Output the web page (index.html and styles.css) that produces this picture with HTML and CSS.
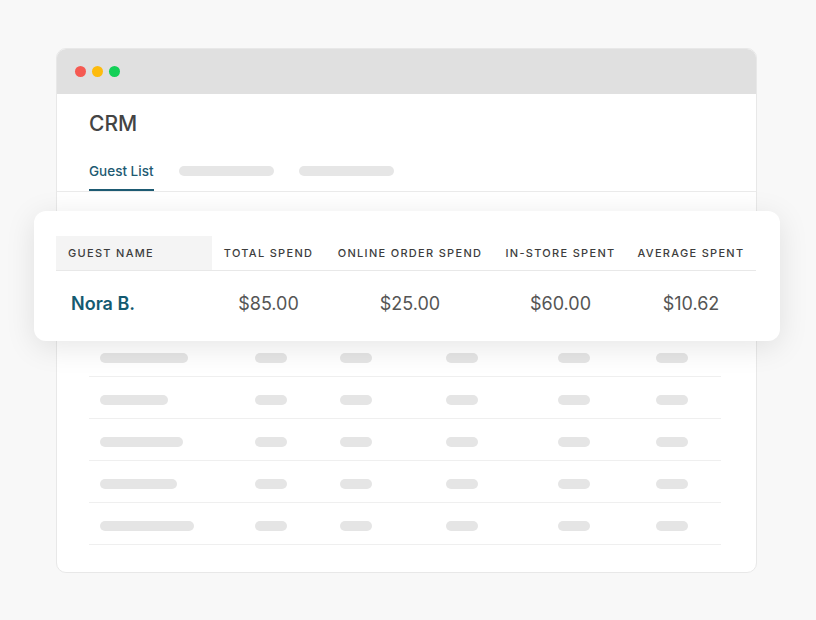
FILE: index.html
```html
<!DOCTYPE html>
<html lang="en">
<head>
    <meta charset="UTF-8">
    <meta name="viewport" content="width=device-width, initial-scale=1.0">
    <title>CRM - Guest List</title>
    <link rel="stylesheet" href="styles.css">
</head>
<body>
    <div class="window">
        <div class="titlebar">
            <span class="dot red"></span>
            <span class="dot yellow"></span>
            <span class="dot green"></span>
        </div>

        <div class="app-header">
            <h1>CRM</h1>
            <div class="tabs">
                <span class="tab active">Guest List</span>
                <span class="tab-placeholder"></span>
                <span class="tab-placeholder"></span>
            </div>
        </div>

        <!-- skeleton rows behind the highlighted card -->
        <div class="skeleton">
            <div class="sk-row">
                <span class="bar" style="width: 88px"></span>
                <span class="bar short"></span><span class="bar short"></span><span class="bar short"></span><span class="bar short"></span><span class="bar short"></span>
            </div>
            <div class="sk-row">
                <span class="bar" style="width: 68px"></span>
                <span class="bar short"></span><span class="bar short"></span><span class="bar short"></span><span class="bar short"></span><span class="bar short"></span>
            </div>
            <div class="sk-row">
                <span class="bar" style="width: 83px"></span>
                <span class="bar short"></span><span class="bar short"></span><span class="bar short"></span><span class="bar short"></span><span class="bar short"></span>
            </div>
            <div class="sk-row">
                <span class="bar" style="width: 77px"></span>
                <span class="bar short"></span><span class="bar short"></span><span class="bar short"></span><span class="bar short"></span><span class="bar short"></span>
            </div>
            <div class="sk-row">
                <span class="bar" style="width: 94px"></span>
                <span class="bar short"></span><span class="bar short"></span><span class="bar short"></span><span class="bar short"></span><span class="bar short"></span>
            </div>
        </div>
    </div>

    <div class="guest-card">
        <div class="guest-table">
            <div class="cell head name-head">Guest Name</div>
            <div class="cell head">Total Spend</div>
            <div class="cell head">Online Order Spend</div>
            <div class="cell head">In-Store Spent</div>
            <div class="cell head">Average Spent</div>

            <div class="cell guest-name">Nora B.</div>
            <div class="cell amount">$85.00</div>
            <div class="cell amount">$25.00</div>
            <div class="cell amount">$60.00</div>
            <div class="cell amount">$10.62</div>
        </div>
    </div>
</body>
</html>
```

FILE: styles.css
```css
body {
    margin: 0;
    background: #f8f8f8;
    font-family: Inter, "Noto Sans", Arial, sans-serif;
    color: #444;
}

.window {
    width: 699px;
    height: 523px;
    margin: 48px 0 0 56px;
    background: white;
    border: 1px solid #e8e8e8;
    border-radius: 10px;
    overflow: hidden;
}

.titlebar {
    height: 45px;
    background: #e0e0e0;
    display: flex;
    align-items: center;
    gap: 6px;
    padding-left: 18px;
}

.dot {
    width: 11px;
    height: 11px;
    border-radius: 50%;
}

.red { background: #f55a52; }
.yellow { background: #fdbb0d; }
.green { background: #13d057; }

.app-header {
    padding: 17px 32px 0;
    border-bottom: 1px solid #ebebeb;
}

.app-header h1 {
    margin: 0;
    font-size: 21px;
    font-weight: 500;
    line-height: 26px;
    color: #444;
}

.tabs {
    display: flex;
    align-items: center;
    gap: 25px;
    margin-top: 24px;
}

.tab {
    font-size: 13.5px;
    font-weight: 500;
    line-height: 20px;
    padding-bottom: 8px;
    color: #1d5a72;
}

.tab.active {
    border-bottom: 2px solid #1d5a72;
}

.tab-placeholder {
    width: 95px;
    height: 10px;
    margin-bottom: 10px;
    background: #e6e6e6;
    border-radius: 5px;
}

.skeleton {
    width: 632px;
    margin: 143px 0 0 32px;
}

.sk-row {
    display: grid;
    grid-template-columns: 155px 85px 106px 112px 98px 1fr;
    align-items: start;
    padding: 18px 0 13px 11px;
    border-bottom: 1px solid #efefef;
}

.bar {
    height: 10px;
    background: #e5e5e5;
    border-radius: 5px;
}

.bar.short {
    width: 32px;
}

/* highlighted row floating over the window */
.guest-card {
    position: absolute;
    left: 34px;
    top: 211px;
    width: 702px;
    padding: 25px 22px 6px;
    background: white;
    border-radius: 12px;
    box-shadow: 0 6px 30px rgba(0, 0, 0, 0.1);
}

.guest-table {
    display: grid;
    grid-template-columns: 156px 113px 170px 131px 130px;
}

.cell {
    display: flex;
    align-items: center;
    justify-content: center;
}

.head {
    height: 34px;
    border-bottom: 1px solid #e8e8e8;
    font-size: 11px;
    font-weight: 500;
    letter-spacing: 1.3px;
    text-transform: uppercase;
    color: #3d3d3d;
}

.name-head {
    justify-content: flex-start;
    padding-left: 12px;
    background: #f4f4f4;
}

.guest-name {
    justify-content: flex-start;
    padding-left: 15px;
    height: 64px;
    font-size: 18px;
    font-weight: 600;
    color: #145a70;
}

.amount {
    height: 64px;
    font-size: 18px;
    color: #555;
}
```
